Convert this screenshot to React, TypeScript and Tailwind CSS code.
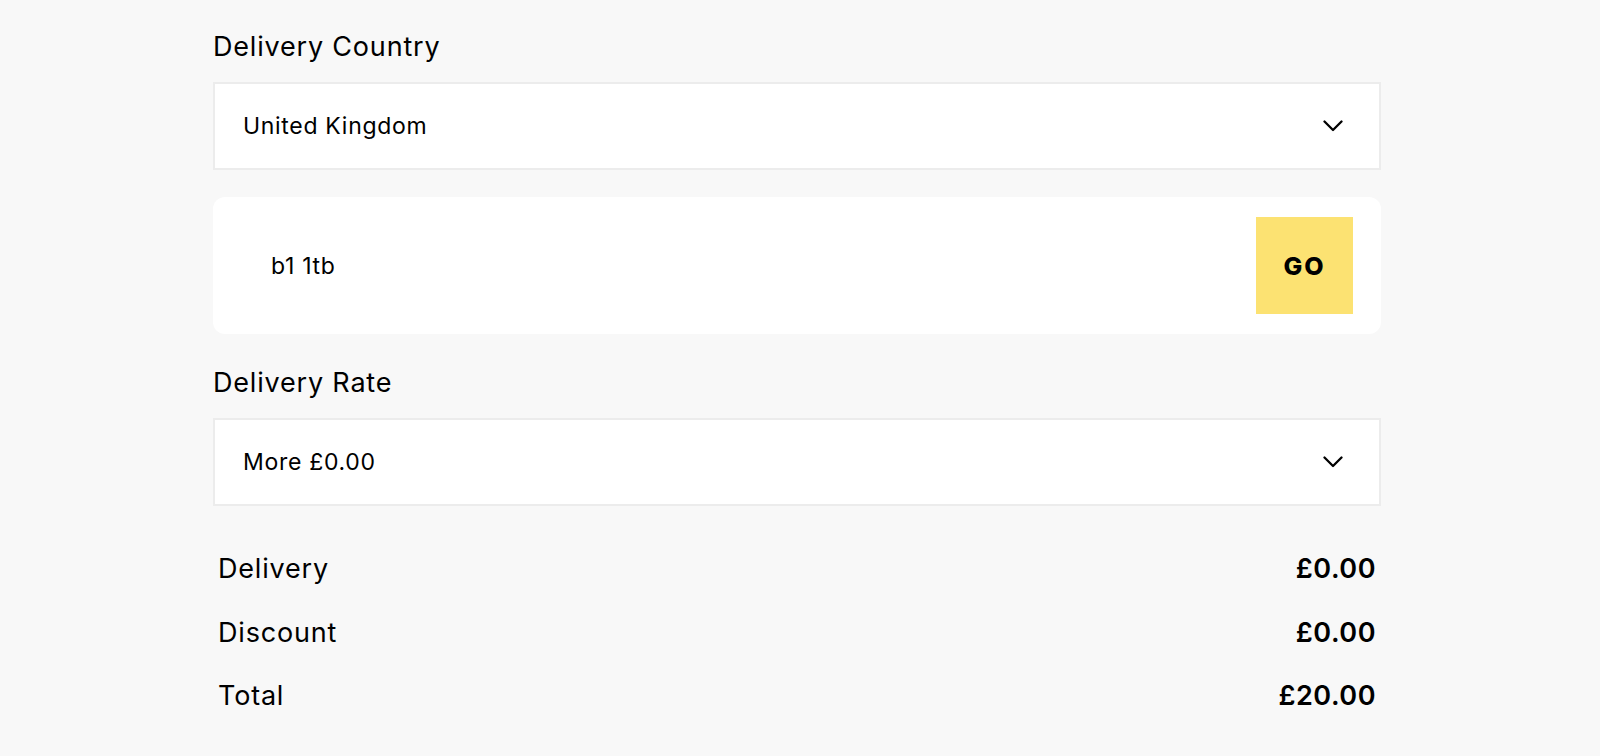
import React from "react";

function Chevron() {
  return (
    <svg width="20" height="12" viewBox="0 0 20 12" fill="none" className="shrink-0">
      <polyline points="1.5,1.5 10,10 18.5,1.5" stroke="#000" strokeWidth="2.3" strokeLinecap="round" strokeLinejoin="round" />
    </svg>
  );
}

function SelectBox({ value }: { value: string }) {
  return (
    <div className="h-[88px] bg-white border-2 border-[#ececec] flex items-center justify-between pl-[28px] pr-[36px]">
      <span className="text-[23px] leading-[28px] tracking-[0.03em] text-black">{value}</span>
      <Chevron />
    </div>
  );
}

export default function App() {
  const rows = [
    { label: "Delivery", amount: "£0.00" },
    { label: "Discount", amount: "£0.00" },
    { label: "Total", amount: "£20.00" },
  ];

  return (
    <div className="min-h-screen bg-[#f8f8f8] font-['Inter',sans-serif] text-black">
      <div className="ml-[213px] w-[1168px] pt-[31px]">
        <h2 className="text-[27px] leading-[32px] tracking-[0.03em] mb-[19px]">Delivery Country</h2>
        <SelectBox value="United Kingdom" />

        {/* postcode lookup */}
        <div className="mt-[27px] h-[137px] rounded-xl bg-white flex items-center justify-between pl-[58px] pr-[28px]">
          <span className="text-[23px] leading-[28px] tracking-[0.03em]">b1 1tb</span>
          <button className="w-[97px] h-[97px] bg-[#fce272] text-[25px] font-extrabold tracking-[0.08em] flex items-center justify-center pt-[2px]">
            GO
          </button>
        </div>

        <h2 className="mt-[33px] text-[27px] leading-[32px] tracking-[0.03em] mb-[19px]">Delivery Rate</h2>
        <SelectBox value="More £0.00" />

        <div className="mt-[47px] flex flex-col gap-[31.5px] px-[5px]">
          {rows.map((row) => (
            <div key={row.label} className="flex items-center justify-between text-[27px] leading-[32px]">
              <span className="tracking-[0.03em]">{row.label}</span>
              <span className="font-semibold tracking-[0.02em]">{row.amount}</span>
            </div>
          ))}
        </div>
      </div>
    </div>
  );
}
